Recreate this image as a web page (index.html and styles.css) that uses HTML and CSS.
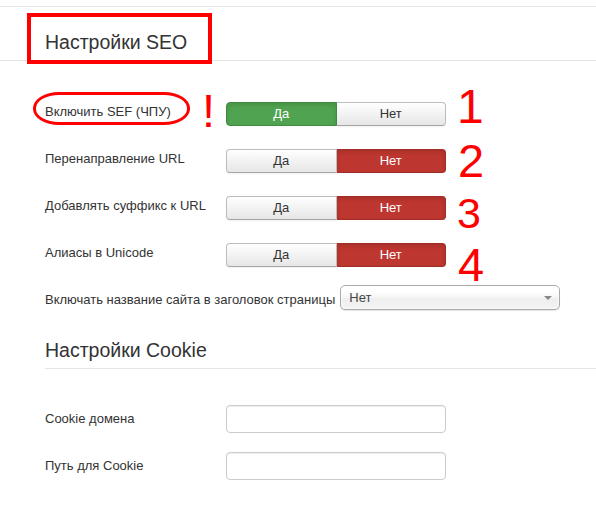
FILE: index.html
```html
<!DOCTYPE html>
<html lang="ru">

<head>
    <meta charset="UTF-8">
    <title>Настройки SEO</title>
    <link rel="stylesheet" href="styles.css">
</head>

<body>
    <div class="page">
        <div class="topline"></div>
        <h2 class="legend legend-wide">Настройки SEO</h2>

        <div class="form form-seo">
            <div class="row row-toggle">
                <label>Включить SEF (ЧПУ)</label>
                <div class="yesno">
                    <span class="btn btn-yes">Да</span>
                    <span class="btn">Нет</span>
                </div>
            </div>
            <div class="row row-toggle">
                <label>Перенаправление URL</label>
                <div class="yesno">
                    <span class="btn">Да</span>
                    <span class="btn btn-no">Нет</span>
                </div>
            </div>
            <div class="row row-toggle">
                <label>Добавлять суффикс к URL</label>
                <div class="yesno">
                    <span class="btn">Да</span>
                    <span class="btn btn-no">Нет</span>
                </div>
            </div>
            <div class="row row-toggle">
                <label>Алиасы в Unicode</label>
                <div class="yesno">
                    <span class="btn">Да</span>
                    <span class="btn btn-no">Нет</span>
                </div>
            </div>
            <div class="row row-select">
                <label>Включать название сайта в заголовок страницы</label>
                <div class="select">
                    <span>Нет</span>
                    <svg class="caret" width="8" height="4" viewBox="0 0 8 4"><path d="M0 0H8L4 4Z" fill="#888"/></svg>
                </div>
            </div>
        </div>

        <h2 class="legend legend-inset">Настройки Cookie</h2>

        <div class="form form-cookie">
            <div class="row row-input">
                <label>Cookie домена</label>
                <input type="text">
            </div>
            <div class="row row-input">
                <label>Путь для Cookie</label>
                <input type="text">
            </div>
        </div>

        <!-- пометки поверх скриншота -->
        <div class="mark mark-box"></div>
        <div class="mark mark-oval"></div>
        <span class="mark note note-excl">!</span>
        <span class="mark note note-1">1</span>
        <span class="mark note note-2">2</span>
        <span class="mark note note-3">3</span>
        <span class="mark note note-4">4</span>
    </div>
</body>

</html>
```

FILE: styles.css
```css
* {
    margin: 0px;
    padding: 0px;
    box-sizing: border-box;
}

body {
    background: #fff;
    color: #333;
    font-family: "Liberation Sans", Arial, sans-serif;
    font-size: 13px;
}

.page {
    position: relative;
    width: 596px;
    height: 526px;
    overflow: hidden;
}

.topline {
    height: 7px;
    border-bottom: 1px solid #e3e3e3;
}

.legend {
    font-size: 19.5px;
    font-weight: normal;
    line-height: 24px;
    color: #333;
    padding-bottom: 6px;
    border-bottom: 1px solid #e5e5e5;
}

.legend-wide {
    margin-top: 23px;
    padding-left: 45px;
}

.legend-inset {
    margin-top: 28px;
    margin-left: 45px;
}

.form {
    padding-left: 45px;
}

.form-seo {
    margin-top: 41px;
}

.form-cookie {
    margin-top: 36px;
}

.row {
    display: flex;
    align-items: flex-start;
}

.row label {
    line-height: 18px;
    white-space: nowrap;
}

.row-toggle label,
.row-input label {
    width: 181px;
}

.row-toggle label {
    padding-top: 1px;
}

.row-toggle + .row-toggle {
    margin-top: 23px;
}

.row-select {
    margin-top: 18px;
}

.row-select label {
    padding-top: 6px;
    margin-right: 5px;
}

.row-input label {
    padding-top: 5px;
}

.row-input + .row-input {
    margin-top: 19px;
}

/* переключатель Да / Нет */
.yesno {
    display: flex;
    width: 220px;
    height: 24px;
}

.btn {
    flex: 1;
    height: 24px;
    line-height: 22px;
    text-align: center;
    color: #333;
    border: 1px solid #bdbdbd;
    border-bottom-color: #a6a6a6;
    background: linear-gradient(#ffffff, #e6e6e6);
    box-shadow: 0 1px 2px rgba(0, 0, 0, 0.06);
}

.btn:first-child {
    border-radius: 4px 0 0 4px;
}

.btn:last-child {
    border-left: 0;
    border-radius: 0 4px 4px 0;
}

.btn-yes {
    color: #fff;
    background: #50a350;
    border-color: #418b41;
    box-shadow: inset 0 2px 4px rgba(0, 0, 0, 0.12);
}

.btn-no {
    color: #fff;
    background: #bd362f;
    border-color: #a12d27;
    box-shadow: inset 0 2px 4px rgba(0, 0, 0, 0.12);
}

/* выпадающий список */
.select {
    position: relative;
    width: 220px;
    height: 25px;
    padding-left: 8px;
    line-height: 23px;
    color: #444;
    border: 1px solid #aaa;
    border-radius: 5px;
    background: linear-gradient(#fff 20%, #f6f6f6 50%, #eee 52%, #f4f4f4 100%);
    box-shadow: inset 0 0 3px #fff, 0 1px 1px rgba(0, 0, 0, 0.1);
}

.caret {
    position: absolute;
    right: 7px;
    top: 10px;
}

input[type="text"] {
    width: 220px;
    height: 28px;
    border: 1px solid #ccc;
    border-radius: 4px;
    background: #fff;
    box-shadow: inset 0 1px 1px rgba(0, 0, 0, 0.075);
}

/* красные пометки */
.mark {
    position: absolute;
}

.mark-box {
    left: 27px;
    top: 13px;
    width: 185px;
    height: 51px;
    border: 4px solid #f00;
}

.mark-oval {
    left: 33px;
    top: 92px;
    width: 157px;
    height: 33px;
    border: 3px solid #f00;
    border-radius: 26px / 16px;
}

.note {
    color: #f00;
    line-height: 1;
    font-family: "Liberation Sans", Arial, sans-serif;
}

.note-excl {
    left: 202px;
    top: 87px;
    font-size: 47px;
}

.note-1 {
    left: 457px;
    top: 83px;
    font-size: 48px;
}

.note-2 {
    left: 458px;
    top: 137px;
    font-size: 47px;
}

.note-3 {
    left: 457px;
    top: 192px;
    font-size: 43px;
}

.note-4 {
    left: 458px;
    top: 241px;
    font-size: 47px;
}
```
